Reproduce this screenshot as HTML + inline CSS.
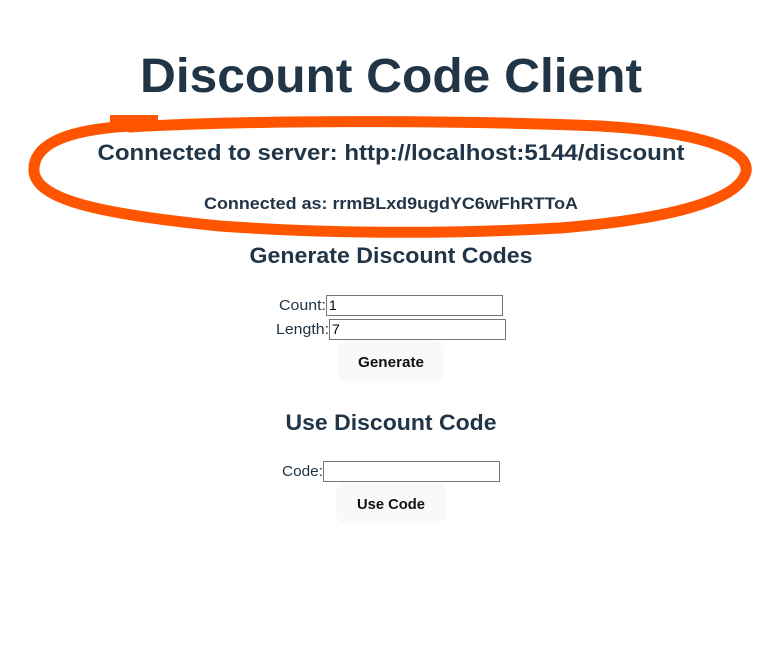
<!DOCTYPE html>
<html><head><style>
html,body{margin:0;background:#fff;width:784px;height:651px;overflow:hidden}
svg{display:block}
text{font-family:"Liberation Sans",Arial,sans-serif;fill:#213547}
</style></head><body>
<svg width="784" height="651" viewBox="0 0 784 651">
<text x="391" y="92" text-anchor="middle" font-size="48" font-weight="bold" textLength="502" lengthAdjust="spacingAndGlyphs">Discount Code Client</text>
<path d="M130,127 C250,120 450,120 600,126 C700,132 750,150 746,172 C740,198 680,218 560,228 C450,234 330,234 220,226 C100,214 38,200 34,172 C32,146 62,130 130,126" fill="none" stroke="#ff5500" stroke-width="11" stroke-linecap="round"/>
<rect x="110" y="115" width="48" height="16" fill="#ff5500"/>
<text x="391" y="160" text-anchor="middle" font-size="22" font-weight="bold" textLength="587" lengthAdjust="spacingAndGlyphs">Connected to server: http://localhost:5144/discount</text>
<text x="391" y="209" text-anchor="middle" font-size="17" font-weight="bold" textLength="374" lengthAdjust="spacingAndGlyphs">Connected as: rrmBLxd9ugdYC6wFhRTToA</text>
<text x="391" y="263" text-anchor="middle" font-size="22" font-weight="bold" textLength="283" lengthAdjust="spacingAndGlyphs">Generate Discount Codes</text>
<text x="279" y="310" font-size="15" textLength="47" lengthAdjust="spacingAndGlyphs">Count:</text>
<rect x="326.5" y="295.5" width="176" height="20" fill="#fff" stroke="#767676"/>
<text x="329" y="310" font-size="14" style="fill:#000">1</text>
<text x="276" y="334" font-size="15" textLength="53" lengthAdjust="spacingAndGlyphs">Length:</text>
<rect x="329.5" y="319.5" width="176" height="20" fill="#fff" stroke="#767676"/>
<text x="332" y="334" font-size="14" style="fill:#000">7</text>
<rect x="338" y="341" width="106" height="40" rx="8" fill="#f9f9f9"/>
<text x="391" y="367" text-anchor="middle" font-size="15" font-weight="bold" style="fill:#111" textLength="66" lengthAdjust="spacingAndGlyphs">Generate</text>
<text x="391" y="430" text-anchor="middle" font-size="22" font-weight="bold" textLength="211" lengthAdjust="spacingAndGlyphs">Use Discount Code</text>
<text x="282" y="476" font-size="15" textLength="41" lengthAdjust="spacingAndGlyphs">Code:</text>
<rect x="323.5" y="461.5" width="176" height="20" fill="#fff" stroke="#767676"/>
<rect x="336" y="483" width="110" height="40" rx="8" fill="#f9f9f9"/>
<text x="391" y="509" text-anchor="middle" font-size="15" font-weight="bold" style="fill:#111" textLength="68" lengthAdjust="spacingAndGlyphs">Use Code</text>
</svg>
</body></html>
